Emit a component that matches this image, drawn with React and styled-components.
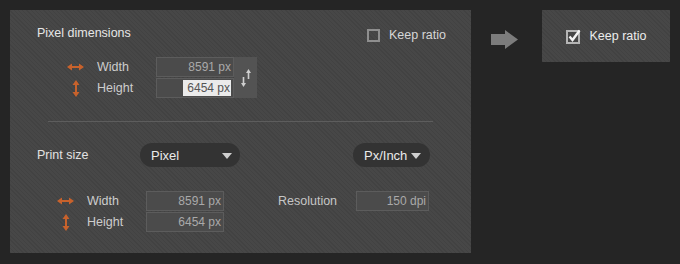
import React from "react";
import styled, { createGlobalStyle } from "styled-components";

const GlobalStyle = createGlobalStyle`
    html, body {
        margin: 0;
        padding: 0;
        background: #252525;
        font-family: "Liberation Sans", Arial, sans-serif;
    }
`;

const stripes = `
    repeating-linear-gradient(
        45deg,
        rgba(0, 0, 0, 0.07) 0px,
        rgba(0, 0, 0, 0.07) 1px,
        transparent 1px,
        transparent 3px
    )
`;

const Page = styled.div`
    width: 680px;
    height: 264px;
    box-sizing: border-box;
    padding: 10px;
    display: flex;
    align-items: flex-start;
`;

const Panel = styled.div`
    width: 461px;
    height: 243px;
    box-sizing: border-box;
    background-color: #474747;
    background-image: ${stripes};
    display: flex;
    flex-direction: column;
    padding-top: 16px;
`;

const HeaderRow = styled.div`
    height: 16px;
    display: flex;
    justify-content: space-between;
    align-items: flex-start;
    padding: 0 25px 0 27px;
`;

const Title = styled.div`
    font-size: 12.5px;
    line-height: 15px;
    color: #e6e6e6;
`;

const CheckLabel = styled.label`
    display: flex;
    align-items: center;
    gap: 9px;
    margin-top: ${p => p.$top || 0}px;
    font-size: 12.5px;
    line-height: 13px;
    color: ${p => (p.$bright ? "#ececec" : "#d6d6d6")};
`;

const Box = styled.span`
    width: 13px;
    height: 13px;
    box-sizing: border-box;
    border: 2px solid #8e8e8e;
    display: block;
`;

const DimGrid = styled.div`
    display: grid;
    grid-template-columns: 30px 59px 78px ${p => (p.$link ? "23px" : "")};
    grid-template-rows: 20px 20px;
    row-gap: 1px;
    align-items: center;
`;

const IconCell = styled.div`
    width: 17px;
    display: flex;
    justify-content: center;
    align-items: center;
`;

const Label = styled.div`
    font-size: 12.5px;
    color: #cdcdcd;
`;

const Field = styled.div`
    height: 20px;
    box-sizing: border-box;
    width: ${p => p.$w || 78}px;
    background: #4b4b4b;
    border: 1px solid #5c5c5c;
    font-size: 12px;
    line-height: 18px;
    color: #a9a9a9;
    text-align: right;
    padding-right: 2px;
`;

const Selected = styled.span`
    background: #ebebeb;
    color: #555;
    padding: 1px 1px 1px 4px;
`;

const LinkButton = styled.div`
    grid-column: 4;
    grid-row: 1 / span 2;
    align-self: stretch;
    background: #535353;
    display: flex;
    align-items: center;
    justify-content: center;
    margin-top: 0;
`;

const Block = styled.div`
    margin: ${p => p.$top}px 0 0 ${p => p.$left}px;
    display: flex;
    align-items: flex-start;
`;

const Separator = styled.div`
    height: 1px;
    background: #5d5d5d;
    margin: 23px 38px 0 38px;
`;

const PrintRow = styled.div`
    margin-top: 21px;
    height: 24px;
    display: flex;
    align-items: center;
    padding: 0 41px 0 27px;
`;

const RowLabel = styled.div`
    width: 103px;
    font-size: 12.5px;
    color: #e2e2e2;
`;

const Dropdown = styled.div`
    width: ${p => p.$w}px;
    height: 24px;
    box-sizing: border-box;
    border-radius: 12px;
    background: #333333;
    display: flex;
    align-items: center;
    justify-content: space-between;
    padding: 0 ${p => p.$pr}px 0 11px;
    font-size: 13px;
    color: #eaeaea;
    margin-left: ${p => (p.$push ? "auto" : "0")};
`;

const Caret = styled.span`
    width: 0;
    height: 0;
    border-left: 5px solid transparent;
    border-right: 5px solid transparent;
    border-top: 6px solid #cfcfcf;
    margin-top: 1px;
`;

const ResLabel = styled.div`
    margin-left: 54px;
    width: 78px;
    height: 20px;
    line-height: 20px;
    font-size: 12.5px;
    color: #c6c6c6;
`;

const ArrowBox = styled.div`
    margin: 20px 0 0 20px;
    width: 27px;
    height: 19px;
`;

const SidePanel = styled.div`
    margin-left: 24px;
    width: 128px;
    height: 52px;
    background-color: #474747;
    background-image: ${stripes};
    display: flex;
    align-items: center;
    justify-content: center;
`;

const HArrow = () => (
    <svg width="17" height="8" viewBox="0 0 17 8">
        <path d="M0 4 L5 0.5 L5 7.5 Z M17 4 L12 0.5 L12 7.5 Z" fill="#c8622c" />
        <rect x="4" y="3" width="9" height="2" fill="#c8622c" />
    </svg>
);

const VArrow = () => (
    <svg width="8" height="17" viewBox="0 0 8 17">
        <path d="M4 0 L0.5 5 L7.5 5 Z M4 17 L0.5 12 L7.5 12 Z" fill="#c8622c" />
        <rect x="3" y="4" width="2" height="9" fill="#c8622c" />
    </svg>
);

const LinkIcon = () => (
    <svg width="12" height="20" viewBox="0 0 12 20">
        <path d="M8.5 1 L6 5 L11 5 Z" fill="#cfcfcf" />
        <rect x="7.7" y="4" width="1.6" height="7" fill="#cfcfcf" />
        <path d="M3.5 19 L1 15 L6 15 Z" fill="#cfcfcf" />
        <rect x="2.7" y="9" width="1.6" height="7" fill="#cfcfcf" />
    </svg>
);

const CheckedBox = () => (
    <svg width="15" height="15" viewBox="0 0 15 15" style={{ display: "block" }}>
        <rect x="1" y="2" width="12" height="12" fill="none" stroke="#b5b5b5" strokeWidth="2" />
        <path d="M3.5 7.5 L6.5 11 L13.5 1.5" fill="none" stroke="#f2f2f2" strokeWidth="2.4" />
    </svg>
);

const DimRows = ({ link, height }) => (
    <DimGrid $link={link}>
        <IconCell>
            <HArrow />
        </IconCell>
        <Label>Width</Label>
        <Field>8591 px</Field>
        {link && (
            <LinkButton>
                <LinkIcon />
            </LinkButton>
        )}
        <IconCell>
            <VArrow />
        </IconCell>
        <Label>Height</Label>
        <Field>{height}</Field>
    </DimGrid>
);

export default function App() {
    return (
        <Page>
            <GlobalStyle />
            <Panel>
                <HeaderRow>
                    <Title>Pixel dimensions</Title>
                    <CheckLabel $top={3}>
                        <Box />
                        Keep ratio
                    </CheckLabel>
                </HeaderRow>
                <Block $top={15} $left={57}>
                    <DimRows link height={<Selected>6454 px</Selected>} />
                </Block>
                <Separator />
                <PrintRow>
                    <RowLabel>Print size</RowLabel>
                    <Dropdown $w={100} $pr={8}>
                        Pixel
                        <Caret />
                    </Dropdown>
                    <Dropdown $w={77} $pr={9} $push>
                        Px/Inch
                        <Caret />
                    </Dropdown>
                </PrintRow>
                <Block $top={24} $left={47}>
                    <DimRows height="6454 px" />
                    <ResLabel>Resolution</ResLabel>
                    <Field $w={73}>150 dpi</Field>
                </Block>
            </Panel>
            <ArrowBox>
                <svg width="27" height="19" viewBox="0 0 27 19">
                    <path d="M0 4 L14 4 L14 0 L27 9.5 L14 19 L14 15 L0 15 Z" fill="#7c7c7c" />
                </svg>
            </ArrowBox>
            <SidePanel>
                <CheckLabel $bright>
                    <CheckedBox />
                    Keep ratio
                </CheckLabel>
            </SidePanel>
        </Page>
    );
}
